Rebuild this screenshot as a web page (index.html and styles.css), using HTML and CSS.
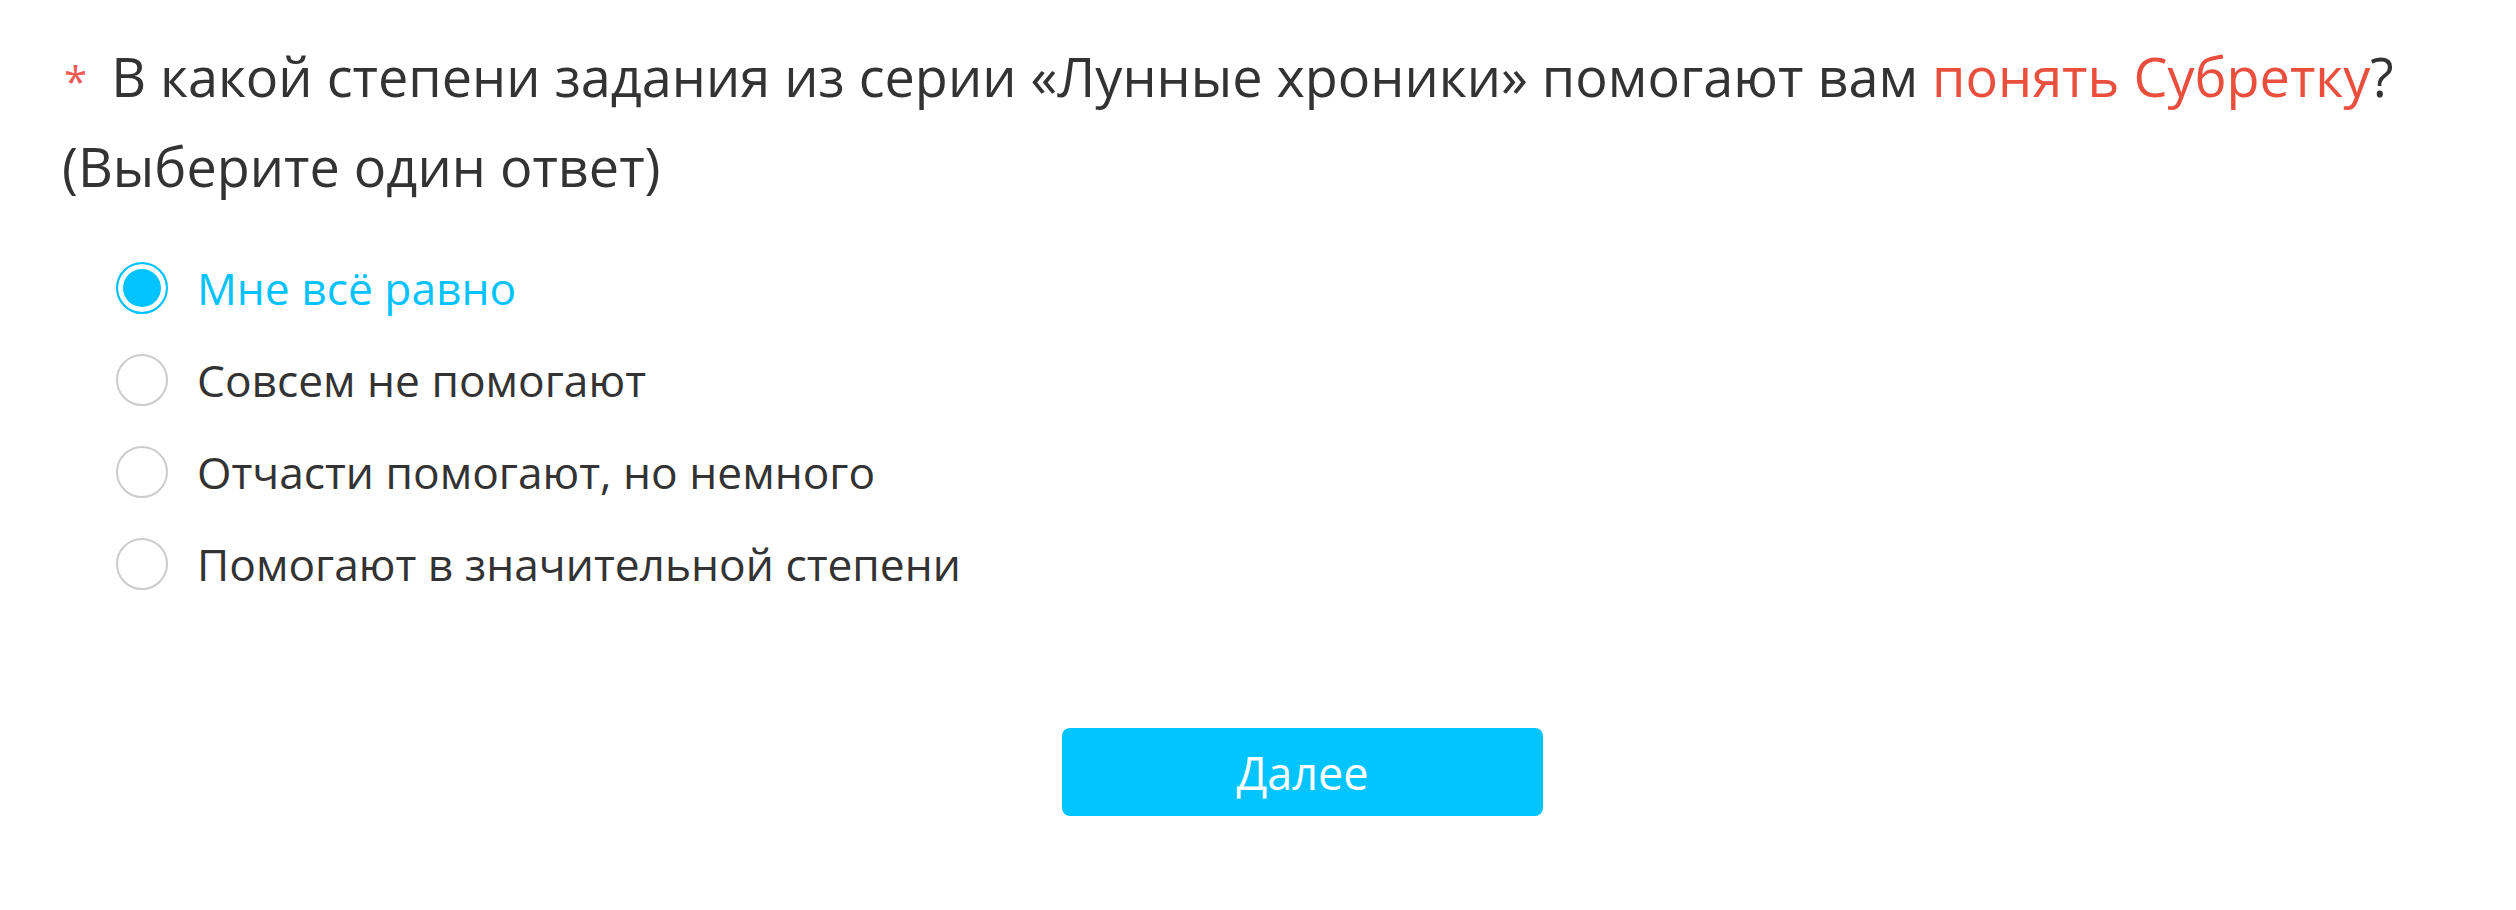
FILE: index.html
```html
<!DOCTYPE html>
<html lang="ru">
<head>
  <meta charset="UTF-8" />
  <meta name="viewport" content="width=device-width, initial-scale=1.0"/>
  <title>Опрос</title>
  <link rel="stylesheet" href="styles.css">
</head>
<body>
  <div class="question">
    <span class="req">*</span><span class="qtext">В какой степени задания из серии «Лунные хроники» помогают вам</span> <span class="hl">понять Субретку</span><span class="qtext">?</span><br>
    <span class="qtext">(Выберите один ответ)</span>
  </div>

  <div class="options">
    <label class="opt checked"><input type="radio" name="q1" checked><span>Мне всё равно</span></label>
    <label class="opt"><input type="radio" name="q1"><span>Совсем не помогают</span></label>
    <label class="opt"><input type="radio" name="q1"><span>Отчасти помогают, но немного</span></label>
    <label class="opt"><input type="radio" name="q1"><span>Помогают в значительной степени</span></label>
  </div>

  <div class="foot">
    <button class="next">Далее</button>
  </div>
</body>
</html>
```

FILE: styles.css
```css
body{margin:0;padding:31px 0 0 62px;font-family:"Open Sans","Noto Sans",sans-serif;color:#333;background:#fff;}
.question{font-size:54px;line-height:90px;padding-right:80px;}
.req{color:#f05a55;font-size:42px;line-height:0;margin:0 24px 0 2px;}
.hl{color:#ea4f3d;}
.options{margin-top:51px;display:flex;flex-direction:column;gap:40px;padding-left:54px;}
.opt{display:flex;align-items:center;gap:29px;font-size:44.3px;line-height:52px;height:52px;color:#333;}
.opt input{appearance:none;-webkit-appearance:none;margin:0;width:52px;height:52px;border:2px solid #ccc;border-radius:50%;background:#fff;box-sizing:border-box;flex:none;}
.opt input:checked{border-color:#02c3fd;background:#02c3fd;box-shadow:inset 0 0 0 5px #fff;}
.opt.checked{color:#02c3fd;}
.foot{display:flex;justify-content:center;padding:138px 0 0 27px;}
.next{width:481px;height:88px;border:0;border-radius:8px;background:#02c4fe;color:#fff;font-family:"Open Sans","Noto Sans",sans-serif;font-size:45px;cursor:pointer;}
```
